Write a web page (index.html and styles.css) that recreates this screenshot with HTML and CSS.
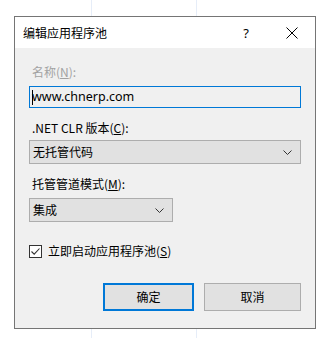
FILE: index.html
```html
<!DOCTYPE html>
<html lang="zh-CN">
<head>
<meta charset="utf-8">
<title>编辑应用程序池</title>
<link rel="stylesheet" href="styles.css">
</head>
<body>
<div class="dialog">
  <div class="titlebar">
    <span class="title">编辑应用程序池</span>
    <span class="help">?</span>
    <span class="close">
      <svg width="12" height="12" viewBox="0 0 12 12"><path d="M0.5 0.5 L11.5 11.5 M11.5 0.5 L0.5 11.5" stroke="#000" stroke-width="1" fill="none"/></svg>
    </span>
  </div>
  <div class="client">
    <div class="label disabled label-first">名称(<u>N</u>):</div>
    <div class="textbox"><span class="caret"></span>www.chnerp.com</div>
    <div class="label label-second">.NET CLR 版本(<u>C</u>):</div>
    <div class="combo combo-wide">
      <span>无托管代码</span>
      <svg class="chev" width="9" height="5" viewBox="0 0 9 5"><path d="M0.5 0.5 L4.5 4.5 L8.5 0.5" stroke="#333" stroke-width="1" fill="none"/></svg>
    </div>
    <div class="label label-third">托管管道模式(<u>M</u>):</div>
    <div class="combo combo-narrow">
      <span>集成</span>
      <svg class="chev" width="9" height="5" viewBox="0 0 9 5"><path d="M0.5 0.5 L4.5 4.5 L8.5 0.5" stroke="#333" stroke-width="1" fill="none"/></svg>
    </div>
    <div class="checkrow">
      <span class="checkbox">
        <svg width="11" height="11" viewBox="0 0 11 11"><path d="M1.5 5.5 L4.2 8.2 L9.5 2.5" stroke="#333" stroke-width="1.1" fill="none"/></svg>
      </span>
      <span class="checklabel">立即启动应用程序池(<u>S</u>)</span>
    </div>
    <div class="buttons">
      <div class="btn btn-ok">确定</div>
      <div class="btn btn-cancel">取消</div>
    </div>
  </div>
</div>
</body>
</html>
```
FILE: styles.css
```css
html, body {
  margin: 0;
  padding: 0;
}
body {
  width: 327px;
  height: 338px;
  overflow: hidden;
  background:
    linear-gradient(to right, transparent 91px, #e6edf8 91px, #e6edf8 92px, transparent 92px),
    linear-gradient(to right, transparent 196px, #e6edf8 196px, #e6edf8 197px, transparent 197px),
    #ffffff;
  font-family: "Noto Sans CJK SC", "Noto Sans", sans-serif;
  font-size: 12px;
  color: #000;
  padding-top: 16px;
  padding-left: 14px;
  box-sizing: border-box;
}
.dialog {
  width: 302px;
  height: 313px;
  box-sizing: border-box;
  border: 1px solid #757575;
  display: flex;
  flex-direction: column;
  background: #f0f0f0;
}
.titlebar {
  height: 31px;
  background: #fff;
  display: flex;
  align-items: center;
  flex-shrink: 0;
}
.title {
  margin-left: 8px;
  font-size: 12px;
  line-height: 16px;
  flex: 1;
}
.help {
  font-family: "Noto Sans", sans-serif;
  font-size: 13px;
  line-height: 16px;
  width: 12px;
  text-align: center;
  margin-right: 34px;
}
.close {
  display: flex;
  margin-right: 17px;
}
.client {
  flex: 1;
  padding: 0 14px;
  display: flex;
  flex-direction: column;
}
.label {
  line-height: 16px;
  padding-left: 3px;
  height: 16px;
}
.label u {
  text-underline-offset: 1px;
}
.disabled {
  color: #a2a2a2;
}
.label-first { margin-top: 16px; }
.label-second { margin-top: 12px; }
.label-third { margin-top: 12px; }
.textbox {
  margin-top: 6px;
  height: 22px;
  box-sizing: border-box;
  border: 1px solid #0078d7;
  background: #f0f0f0;
  display: flex;
  align-items: center;
  padding-left: 2px;
  line-height: 16px;
  font-family: "Noto Sans", "Noto Sans CJK SC", sans-serif;
  font-size: 12.5px;
}
.caret {
  width: 1px;
  height: 15px;
  background: #000;
  margin-right: -1px;
}
.combo {
  box-sizing: border-box;
  border: 1px solid #adadad;
  background: #e1e1e1;
  display: flex;
  align-items: center;
  justify-content: space-between;
  padding-left: 3px;
  padding-right: 8px;
  line-height: 16px;
}
.combo-wide {
  margin-top: 4px;
  height: 24px;
}
.combo-narrow {
  margin-top: 6px;
  height: 24px;
  width: 144px;
}
.chev {
  display: block;
}
.checkrow {
  margin-top: 22px;
  display: flex;
  align-items: center;
  height: 14px;
}
.checkbox {
  width: 13px;
  height: 13px;
  box-sizing: border-box;
  border: 1px solid #333;
  background: #fff;
  display: flex;
  align-items: center;
  justify-content: center;
}
.checklabel {
  margin-left: 6px;
  line-height: 16px;
}
.buttons {
  margin-top: 25px;
  display: flex;
  justify-content: flex-end;
  gap: 10px;
}
.btn {
  height: 28px;
  box-sizing: border-box;
  background: #e1e1e1;
  display: flex;
  align-items: center;
  justify-content: center;
  line-height: 16px;
}
.btn-ok {
  width: 91px;
  border: 2px solid #0078d7;
}
.btn-cancel {
  width: 97px;
  border: 1px solid #adadad;
}
```
